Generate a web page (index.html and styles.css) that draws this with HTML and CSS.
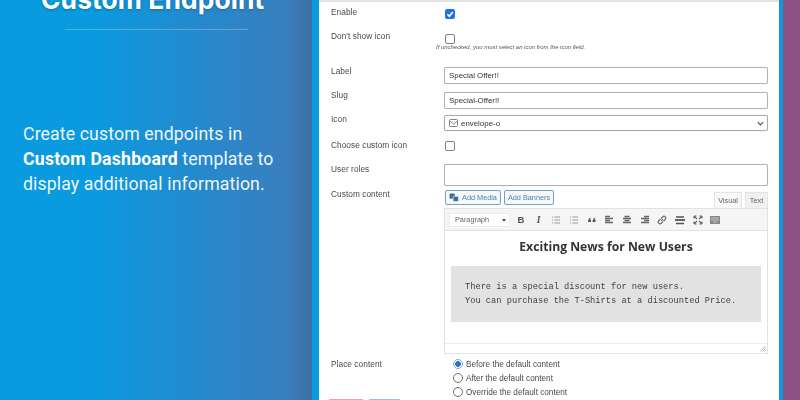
FILE: index.html
```html
<!DOCTYPE html>
<html lang="en">
<head>
<meta charset="utf-8">
<title>Custom Endpoint</title>
<link rel="stylesheet" href="styles.css">
</head>
<body>
<div class="page">
  <section class="intro">
    <h1 class="intro-title">Custom Endpoint</h1>
    <div class="intro-rule"></div>
    <p class="intro-text">Create custom endpoints in <strong>Custom Dashboard</strong> template to display additional information.</p>
  </section>
  <section class="frame">
    <form class="panel">
      <div class="row row-enable">
        <span class="lbl">Enable</span>
        <div class="ctl"><span class="check checked"><svg viewBox="0 0 10 10" width="10" height="10"><path d="M2.4 5.2 4.3 7.2 7.8 2.9" fill="none" stroke="#fff" stroke-width="1.6"/></svg></span></div>
      </div>
      <div class="row row-noicon">
        <span class="lbl">Don't show icon</span>
        <div class="ctl"><span class="check"></span><p class="help">If unchecked, you must select an icon from the icon field.</p></div>
      </div>
      <div class="row row-label">
        <span class="lbl">Label</span>
        <div class="ctl"><div class="input">Special Offer!!</div></div>
      </div>
      <div class="row row-slug">
        <span class="lbl">Slug</span>
        <div class="ctl"><div class="input">Special-Offer!!</div></div>
      </div>
      <div class="row row-icon">
        <span class="lbl">Icon</span>
        <div class="ctl"><div class="input select">
          <svg class="env" viewBox="0 0 9 8" width="9" height="8"><rect x=".5" y=".5" width="8" height="7" rx="1" fill="none" stroke="#666" stroke-width=".8"/><path d="M.7 2 4.5 5 8.3 2" fill="none" stroke="#666" stroke-width=".8"/></svg>
          <span class="select-val">envelope-o</span>
          <svg class="chev" viewBox="0 0 8 5" width="7" height="5"><path d="M1 1 4 4 7 1" fill="none" stroke="#555" stroke-width="1.4"/></svg>
        </div></div>
      </div>
      <div class="row row-choose">
        <span class="lbl">Choose custom icon</span>
        <div class="ctl"><span class="check"></span></div>
      </div>
      <div class="row row-roles">
        <span class="lbl">User roles</span>
        <div class="ctl"><div class="input tall"></div></div>
      </div>
      <div class="row row-content">
        <span class="lbl">Custom content</span>
        <div class="ctl">
          <div class="ed-top">
            <span class="wpbtn media"><svg viewBox="0 0 11 10" width="10" height="9"><rect x=".5" y=".5" width="6" height="6" rx="1.4" fill="#3f6f95"/><rect x="4.5" y="3.5" width="6" height="6" rx="1.4" fill="#3f6f95" stroke="#fff" stroke-width=".7"/></svg>Add Media</span>
            <span class="wpbtn">Add Banners</span>
            <span class="tabs"><span class="tab on">Visual</span><span class="tab">Text</span></span>
          </div>
          <div class="editor">
            <div class="toolbar">
              <span class="fmt">Paragraph<i class="fmt-arrow"></i></span>
              <span class="tool b">B</span>
              <span class="tool i">I</span>
              <span class="tool"><svg viewBox="0 0 10 10" width="10" height="10"><path d="M1 2h1M1 5h1M1 8h1M3.5 2H9M3.5 5H9M3.5 8H9" stroke="#999" stroke-width="1.2"/></svg></span>
              <span class="tool"><svg viewBox="0 0 10 10" width="10" height="10"><path d="M1 2h1M1 5h1M1 8h1M3.5 2H9M3.5 5H9M3.5 8H9" stroke="#999" stroke-width="1.2"/></svg></span>
              <span class="tool"><svg viewBox="0 0 10 10" width="10" height="10"><path d="M4 2.5C2 3 1 4.500 1 7h3V4.500H2.800M8.500 2.500C6.500 3 5.500 4.500 5.500 7h3V4.500H7.300" fill="#555"/></svg></span>
              <span class="tool"><svg viewBox="0 0 10 10" width="10" height="10"><path d="M1 1.500h5M1 3.500h8M1 5.500h5M1 7.500h8" stroke="#666" stroke-width="1.300"/></svg></span>
              <span class="tool"><svg viewBox="0 0 10 10" width="10" height="10"><path d="M2.500 1.500h5M1 3.500h8M2.500 5.500h5M1 7.500h8" stroke="#666" stroke-width="1.300"/></svg></span>
              <span class="tool"><svg viewBox="0 0 10 10" width="10" height="10"><path d="M4 1.500h5M1 3.500h8M4 5.500h5M1 7.500h8" stroke="#666" stroke-width="1.300"/></svg></span>
              <span class="tool"><svg viewBox="0 0 10 10" width="10" height="10"><path d="M4.200 5.800 5.800 4.200M3.500 4 1.800 5.700a1.700 1.700 0 0 0 2.500 2.500L6 6.500M6.500 6 8.200 4.300a1.700 1.700 0 0 0-2.500-2.500L4 3.500" fill="none" stroke="#666" stroke-width="1.200"/></svg></span>
              <span class="tool"><svg viewBox="0 0 10 10" width="10" height="10"><path d="M1 2h8M1 8.500h8" stroke="#555" stroke-width="1.300"/><path d="M0 5h10" stroke="#555" stroke-width="1.800"/></svg></span>
              <span class="tool"><svg viewBox="0 0 10 10" width="10" height="10"><path d="M1 1 4 4M9 1 6 4M1 9 4 6M9 9 6 6M1 1h2.500M1 1v2.500M9 1H6.500M9 1v2.500M1 9h2.500M1 9V6.500M9 9H6.500M9 9V6.500" fill="none" stroke="#666" stroke-width="1.100"/></svg></span>
              <span class="tool"><svg viewBox="0 0 10 10" width="10" height="10"><path d="M0 1h10v8H0z" fill="#888"/><path d="M1 3h8M1 5h8M3 7h4" stroke="#ddd" stroke-width=".7"/></svg></span>
            </div>
            <div class="ed-body">
              <h2 class="ed-h">Exciting News for New Users</h2>
              <pre class="ed-pre">There is a special discount for new users.
You can purchase the T-Shirts at a discounted Price.</pre>
            </div>
            <div class="ed-status"><svg viewBox="0 0 6 6" width="6" height="6"><path d="M5.500 0 0 5.500M5.500 2.500 2.500 5.500M5.500 4.500 4.500 5.500" stroke="#999" stroke-width=".8"/></svg></div>
          </div>
        </div>
      </div>
      <div class="row row-place">
        <span class="lbl">Place content</span>
        <div class="ctl radios">
          <div class="radio-line"><span class="radio on"></span>Before the default content</div>
          <div class="radio-line"><span class="radio"></span>After the default content</div>
          <div class="radio-line"><span class="radio"></span>Override the default content</div>
        </div>
      </div>
      <div class="actions"><span class="act red"></span><span class="act blue"></span></div>
    </form>
  </section>
  <aside class="edge"></aside>
</div>
</body>
</html>
```
FILE: styles.css
```css
* { box-sizing: border-box; }
html, body { margin: 0; padding: 0; }
body { width: 800px; height: 400px; overflow: hidden; font-family: "Liberation Sans", Arial, sans-serif; }

.page { display: flex; width: 800px; height: 400px; overflow: hidden; }

.intro {
  width: 312px;
  flex: none;
  color: #fff;
  overflow: hidden;
  background:
    linear-gradient(90deg, rgba(60,90,140,0) 0, rgba(60,90,140,0) 285px, rgba(60,100,150,.55) 312px),
    linear-gradient(90deg, #0a9ae0 0, #0a9ae0 90px, #2589cd 200px, #3a7fbf 290px, #3c7cb9 312px);
}
.intro-title {
  margin: -17px 0 0;
  height: 32px;
  padding-left: 41px;
  font: 700 26.400px/32px "Inter", "Open Sans", sans-serif;
  letter-spacing: .1px;
  white-space: nowrap;
  text-shadow: 0 1px 3px rgba(0,0,0,.25);
}
.intro-rule {
  width: 183px;
  height: 1px;
  margin: 14px 0 0 65px;
  background: rgba(255,255,255,.25);
}
.intro-text {
  margin: 92px 0 0 23px;
  width: 270px;
  font: 400 17.700px/25px Roboto, sans-serif;
  color: #eef6fb;
  letter-spacing: .12px;
}
.intro-text strong { font-weight: 700; color: #fff; letter-spacing: .2px; }

.frame {
  flex: none;
  width: 471px;
  padding: 0 4px 0 7px;
  background: #0a9ae0;
}
.panel {
  width: 460px;
  height: 400px;
  padding-left: 12px;
  background: #fff;
  border-top: 2px solid #e3e3e3;
  filter: blur(.7px);
  overflow: hidden;
}
.edge { flex: 1; background: #8a5285; }

.row { display: grid; grid-template-columns: 113px 324px; }
.lbl { font-size: 8.300px; line-height: 12px; color: #4a4a4a; letter-spacing: .05px; white-space: nowrap; }
.ctl { min-width: 0; }

.row-enable { height: 28px; }
.row-enable .lbl { margin-top: 4px; }
.row-enable .ctl { padding: 7px 0 0 1px; }

.row-noicon { height: 34px; }
.row-noicon .ctl { padding: 4px 0 0 1px; }

.row-label { height: 25px; }
.row-label .lbl { margin-top: 1px; }
.row-label .ctl { padding-top: 3px; }

.row-slug { height: 23px; }
.row-slug .ctl { padding-top: 3px; }

.row-icon { height: 22px; }
.row-icon .lbl { margin-top: 1px; }
.row-icon .ctl { padding-top: 3px; }

.row-choose { height: 26px; }
.row-choose .lbl { margin-top: 5px; }
.row-choose .ctl { padding: 7px 0 0 1px; }

.row-roles { height: 26px; }
.row-roles .lbl { margin-top: 3px; }
.row-roles .ctl { padding-top: 4px; }

.row-content { height: 168px; }
.row-content .lbl { margin-top: 2px; }
.row-content .ctl { padding-top: 4px; }

.row-place { height: 45px; }
.row-place .lbl { margin-top: 4px; }

.check {
  display: block;
  width: 10px;
  height: 10px;
  border: 1px solid #808080;
  border-radius: 2px;
  background: #fff;
}
.check.checked { background: #1a73e8; border: 0; }
.check svg { display: block; }

.help {
  margin: 0 0 0 -9px;
  font: italic 5.950px/7px "Liberation Sans", sans-serif;
  color: #555;
  white-space: nowrap;
}

.input {
  width: 324px;
  height: 17px;
  padding-left: 4px;
  border: 1px solid #aeb3b7;
  border-radius: 2px;
  background: #fff;
  font-size: 7.900px;
  line-height: 15px;
  color: #333;
  box-shadow: 0 0 1px #c9ccce;
}
.input.select { height: 16px; display: flex; align-items: center; border-color: #a6abaf; }
.input.tall { height: 22px; }
.env { flex: none; margin-right: 3px; }
.select-val { flex: 1; }
.chev { flex: none; margin-right: 3px; }

.ed-top { display: flex; align-items: flex-start; height: 18px; padding-left: 1px; }
.wpbtn {
  display: inline-flex;
  align-items: center;
  justify-content: center;
  height: 15px;
  padding: 0 4px;
  margin-right: 3px;
  border: 1px solid #6ea2c6;
  border-radius: 2px;
  background: #f6f7f7;
  color: #4a88b0;
  font-size: 7.300px;
  white-space: nowrap;
}
.wpbtn.media { width: 56px; padding: 0 2px; }
.wpbtn.media svg { margin-right: 3px; flex: none; }
.wpbtn:nth-child(2) { width: 50px; }
.tabs { display: flex; margin-left: auto; padding-top: 2px; gap: 3px; }
.tab {
  width: 23px;
  height: 16px;
  border: 1px solid #e4e4e4;
  border-bottom: 0;
  background: #f0f0f0;
  color: #666;
  font-size: 7.300px;
  line-height: 15px;
  text-align: center;
}
.tab.on { width: 28px; background: #f8f8f8; margin-right: 0; }

.editor { width: 324px; border: 1px solid #e2e2e2; }
.toolbar {
  display: flex;
  align-items: center;
  height: 22px;
  padding-left: 4px;
  background: #f5f5f5;
  border-bottom: 1px solid #e2e2e2;
}
.fmt {
  position: relative;
  display: block;
  width: 61px;
  height: 14px;
  margin-right: 2px;
  padding-left: 5px;
  background: #fff;
  border: 1px solid #ececec;
  font-size: 7.300px;
  line-height: 12px;
  color: #666;
}
.fmt-arrow {
  position: absolute;
  right: 3px;
  top: 5px;
  border: 2.500px solid transparent;
  border-top: 3px solid #555;
  border-bottom: 0;
}
.tool {
  display: flex;
  align-items: center;
  justify-content: center;
  width: 17.700px;
  height: 14px;
  flex: none;
  font: 700 9.500px/14px "Liberation Sans", sans-serif;
  color: #555;
}
.tool.i { font: italic 700 9.500px/14px "Liberation Serif", serif; }

.ed-body { height: 112px; padding: 8px 6px 0; background: #fff; }
.ed-h {
  margin: 0 0 12px;
  height: 15px;
  font: 700 12.200px/15px "Open Sans", sans-serif;
  color: #333;
  text-align: center;
}
.ed-pre {
  margin: 0;
  height: 56px;
  padding: 15px 0 0 14px;
  background: #e2e2e2;
  font: 400 8.700px/13.500px "Liberation Mono", monospace;
  color: #3f3f3f;
}
.ed-status {
  display: flex;
  justify-content: flex-end;
  align-items: flex-end;
  height: 10px;
  padding: 0 1px 1px 0;
  border-top: 1px solid #ececec;
}
.ed-status svg { display: block; }

.radios { padding: 3px 0 0 9px; }
.radio-line {
  display: flex;
  align-items: center;
  height: 14px;
  font-size: 8.200px;
  color: #4a4a4a;
  white-space: nowrap;
}
.radio {
  flex: none;
  width: 10px;
  height: 10px;
  margin-right: 3px;
  border: 1px solid #707070;
  border-radius: 50%;
  background: #fff;
}
.radio.on {
  border-color: #7aa7d8;
  background: radial-gradient(circle, #2a6fc9 0 2.600px, #fff 3.100px);
}

.actions { display: flex; gap: 4px; margin-left: -3px; }
.act { width: 36px; height: 12px; border-radius: 2px; border: 1px solid; }
.act.red { background: #f6dcdc; border-color: #eba3a3; }
.act.blue { width: 33px; background: #dce8f6; border-color: #9fbde0; }
```
